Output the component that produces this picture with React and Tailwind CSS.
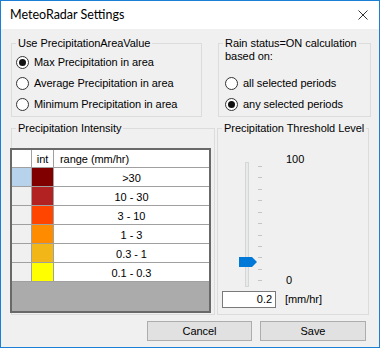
const rows = [
  { swatch: 'bg-[#800000]', range: '>30', head: 'bg-[#b7d3ec]' },
  { swatch: 'bg-[#b22222]', range: '10 - 30', head: 'bg-[#f0f0f0]' },
  { swatch: 'bg-[#ff4500]', range: '3 - 10', head: 'bg-[#f0f0f0]' },
  { swatch: 'bg-[#ff8c00]', range: '1 - 3', head: 'bg-[#f0f0f0]' },
  { swatch: 'bg-[#f2b619]', range: '0.3 - 1', head: 'bg-[#f0f0f0]' },
  { swatch: 'bg-[#ffff00]', range: '0.1 - 0.3', head: 'bg-[#f0f0f0]' },
]

function GroupBox({ title, className, children }) {
  return (
    <div className={`border border-[#dcdcdc] ${className}`}>
      <div className="-mt-[7px] ml-[4px] w-fit bg-[#f0f0f0] px-[2px] leading-[13px]">{title}</div>
      {children}
    </div>
  )
}

function Radio({ checked, label, indent }) {
  return (
    <div className={`flex h-[21px] items-center ${indent}`}>
      <span className="flex h-[13px] w-[13px] items-center justify-center rounded-full border border-[#333] bg-white">
        {checked && <span className="h-[7px] w-[7px] rounded-full bg-[#111]" />}
      </span>
      <span className="ml-[5px]">{label}</span>
    </div>
  )
}

function Slider() {
  const ticks = Array.from({ length: 11 }, (_, i) => 6 + i * 11.43)
  return (
    <svg width="26" height="130" viewBox="0 0 26 130" className="mt-[25px] ml-[20px] shrink-0">
      <rect x="7.5" y="2.5" width="3" height="124" fill="#e7eaea" stroke="#d6d6d6" />
      {ticks.map((y) => (
        <rect key={y} x="20" y={Math.round(y)} width="4" height="1" fill="#c4c4c4" />
      ))}
      <polygon points="1,97 14,97 19,102 14,107 1,107" fill="#0078d7" />
    </svg>
  )
}

export default function App() {
  return (
    <div className="h-[349px] w-[381px] bg-white font-['Liberation_Sans',Arial,sans-serif] text-[11px] tracking-[-0.05px] text-black">
      <div className="flex h-[348px] w-[380px] flex-col border border-[#1c7fd6]">
        <div className="flex h-[28px] items-center justify-between bg-white pl-[9px] pr-[11px]">
          <span className="font-['Lato',sans-serif] text-[12.5px] tracking-normal">MeteoRadar Settings</span>
          <svg width="10" height="10" viewBox="0 0 10 10">
            <path d="M0.5 0.5 L9.5 9.5 M9.5 0.5 L0.5 9.5" stroke="#333" strokeWidth="1" />
          </svg>
        </div>

        <div className="flex flex-1 flex-col bg-[#f0f0f0] pl-[10px]">
          <div className="mt-[14px] flex">
            <GroupBox title="Use PrecipitationAreaValue" className="h-[74px] w-[191px]">
              <div className="mt-[2px]">
                <Radio checked label="Max Precipitation in area" indent="ml-[4px]" />
                <Radio label="Average Precipitation in area" indent="ml-[4px]" />
                <Radio label="Minimum Precipitation in area" indent="ml-[4px]" />
              </div>
            </GroupBox>
            <GroupBox
              title={<>Rain status=ON calculation<br />based on:</>}
              className="ml-[16px] h-[74px] w-[153px]"
            >
              <div className="mt-[10px]">
                <Radio label="all selected periods" indent="ml-[6px]" />
                <Radio checked label="any selected periods" indent="ml-[6px]" />
              </div>
            </GroupBox>
          </div>

          <div className="mt-[11px] flex">
            <GroupBox title="Precipitation Intensity" className="h-[187px] w-[204px]">
              <div className="-ml-[2px] mt-[13px] flex h-[165px] w-[201px] flex-col border-2 border-[#696969] bg-[#ababab]">
                <div className="flex h-[18px] border-b border-[#a0a0a0] bg-white">
                  <div className="w-[20px] border-r border-[#a0a0a0]" />
                  <div className="flex w-[22px] items-center justify-center border-r border-[#a0a0a0] pt-[1px]">int</div>
                  <div className="flex flex-1 items-center pl-[6px] pt-[1px]">range (mm/hr)</div>
                </div>
                {rows.map((row) => (
                  <div key={row.range} className="flex h-[19px] border-b border-[#a0a0a0] bg-white">
                    <div className={`w-[20px] border-r border-[#a0a0a0] ${row.head}`} />
                    <div className={`w-[22px] border-r border-[#a0a0a0] ${row.swatch}`} />
                    <div className="flex flex-1 items-center justify-center pt-[3px]">{row.range}</div>
                  </div>
                ))}
              </div>
            </GroupBox>

            <GroupBox title="Precipitation Threshold Level" className="ml-[2px] h-[187px] w-[152px]">
              <div className="flex items-start">
                <Slider />
                <div className="ml-[22px] mt-[18px] flex h-[134px] flex-col justify-between leading-[13px]">
                  <span>100</span>
                  <span>0</span>
                </div>
              </div>
              <div className="mt-[1px] flex items-center">
                <div className="ml-[4px] flex h-[17px] w-[54px] items-center justify-end border border-[#7a7a7a] bg-white pr-[3px]">
                  0.2
                </div>
                <span className="ml-[9px]">[mm/hr]</span>
              </div>
            </GroupBox>
          </div>

          <div className="mt-[6px] flex justify-end gap-[8px] pr-[13px]">
            <button className="h-[20px] w-[105px] border border-[#adadad] bg-[#e1e1e1]">Cancel</button>
            <button className="h-[20px] w-[106px] border border-[#adadad] bg-[#e1e1e1]">Save</button>
          </div>
        </div>
      </div>
    </div>
  )
}
